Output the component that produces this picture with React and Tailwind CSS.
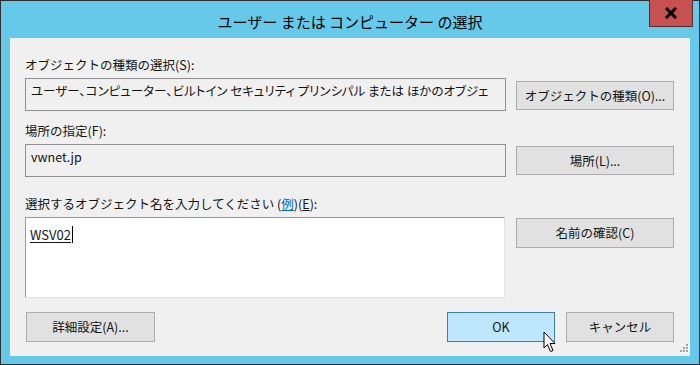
import React from "react";

const font = { fontFamily: '"Noto Sans CJK JP", "Noto Sans", sans-serif' };

function Btn({ children, className = "" }) {
  return (
    <div
      className={
        "flex items-center justify-center border text-[12.5px] leading-[16px] text-[#141414] " +
        className
      }
    >
      {children}
    </div>
  );
}

function Cursor() {
  return (
    <svg
      className="absolute left-[542px] top-[330px]"
      width="14"
      height="22"
      viewBox="0 0 14 22"
    >
      <path
        d="M1 1 L1 17 L4.5 13.5 L7.5 20.5 L10 19.5 L7 12.5 L12 12.5 Z"
        fill="#fff"
        stroke="#000"
        strokeWidth="1"
      />
    </svg>
  );
}

function Grip() {
  const dots = [
    [8, 0],
    [5, 3],
    [8, 3],
    [2, 6],
    [5, 6],
    [8, 6],
  ];
  return (
    <svg
      className="absolute left-[677px] top-[343px]"
      width="11"
      height="9"
      viewBox="0 0 11 9"
    >
      {dots.map(([x, y], i) => (
        <g key={i}>
          <rect x={x + 1} y={y + 1} width="2" height="2" fill="#fff" />
          <rect x={x} y={y} width="2" height="2" fill="#a0a0a0" />
        </g>
      ))}
    </svg>
  );
}

export default function App() {
  return (
    <div
      className="relative w-[700px] h-[365px] border border-[#2f2f2f] bg-[#66c9ea] flex flex-col"
      style={font}
    >
      {/* title bar */}
      <div className="relative h-[37px] flex items-center justify-center">
        <span className="text-[15px] leading-[20px] text-black pt-[4px]">
          ユーザー または コンピューター の選択
        </span>
        <div className="absolute left-[648px] top-[-1px] w-[44px] h-[27px] bg-[#c75050] border border-[#5a2b2b] border-t-0 flex items-center justify-center">
          <svg width="14" height="12" viewBox="0 0 14 12">
            <path d="M2 1 L12 11 M12 1 L2 11" stroke="#000" strokeWidth="3" />
          </svg>
        </div>
      </div>

      {/* content */}
      <div className="mx-[9px] mb-[8px] flex-1 bg-[#f0f0f0] pl-[15px] pr-[16px]">
        <div className="mt-[19px] h-[16px] text-[12.5px] leading-[16px] text-[#141414]">
          オブジェクトの種類の選択(S):
        </div>
        <div className="mt-[5px] flex items-start gap-[10px]">
          <div className="w-[481px] h-[33px] border border-[#8f8f8f] bg-[#f0f0f0] overflow-hidden whitespace-nowrap pl-[5px] pr-[2px] pt-[4px] text-[12.5px] leading-[16px] text-[#141414] [font-feature-settings:'palt']">
            ユーザー、コンピューター、ビルトイン セキュリティ プリンシパル または ほかのオブジェ
          </div>
          <Btn className="mt-[3px] w-[158px] h-[29px] bg-[#e1e1e1] border-[#adadad]">
            オブジェクトの種類(O)...
          </Btn>
        </div>

        <div className="mt-[12px] h-[16px] text-[12.5px] leading-[16px] text-[#141414]">
          場所の指定(F):
        </div>
        <div className="mt-[5px] flex items-start gap-[10px]">
          <div className="w-[481px] h-[33px] border border-[#8f8f8f] bg-[#f0f0f0] px-[5px] pt-[4px] text-[12.5px] leading-[16px] text-[#141414]">
            vwnet.jp
          </div>
          <Btn className="mt-[2px] w-[158px] h-[29px] bg-[#e1e1e1] border-[#adadad]">
            場所(L)...
          </Btn>
        </div>

        <div className="mt-[19px] h-[16px] text-[12.5px] leading-[16px] text-[#141414]">
          選択するオブジェクト名を入力してください (
          <span className="text-[#0066cc] underline">例</span>)(
          <span className="underline">E</span>):
        </div>
        <div className="mt-[5px] flex items-start gap-[11px]">
          <div className="w-[480px] h-[81px] bg-white border-t border-l border-[#9a9a9a] border-r-[#e3e3e3] border-b-[#e3e3e3] border-r border-b px-[4px] pt-[3px]">
            <span className="inline-block text-[13px] leading-[17px] text-[#141414] underline underline-offset-[2px] border-r border-black pr-[1px]">
              WSV02
            </span>
          </div>
          <Btn className="mt-[1px] w-[158px] h-[30px] bg-[#e1e1e1] border-[#adadad]">
            名前の確認(C)
          </Btn>
        </div>

        <div className="mt-[14px] flex items-start">
          <Btn className="ml-[1px] w-[129px] h-[30px] bg-[#e1e1e1] border-[#adadad]">
            詳細設定(A)...
          </Btn>
          <div className="flex-1" />
          <Btn className="w-[108px] h-[30px] bg-[#bee6fd] border-[#3c7fb1]">OK</Btn>
          <Btn className="ml-[11px] w-[108px] h-[30px] bg-[#e1e1e1] border-[#adadad]">
            キャンセル
          </Btn>
        </div>
      </div>

      <Grip />
      <Cursor />
    </div>
  );
}
